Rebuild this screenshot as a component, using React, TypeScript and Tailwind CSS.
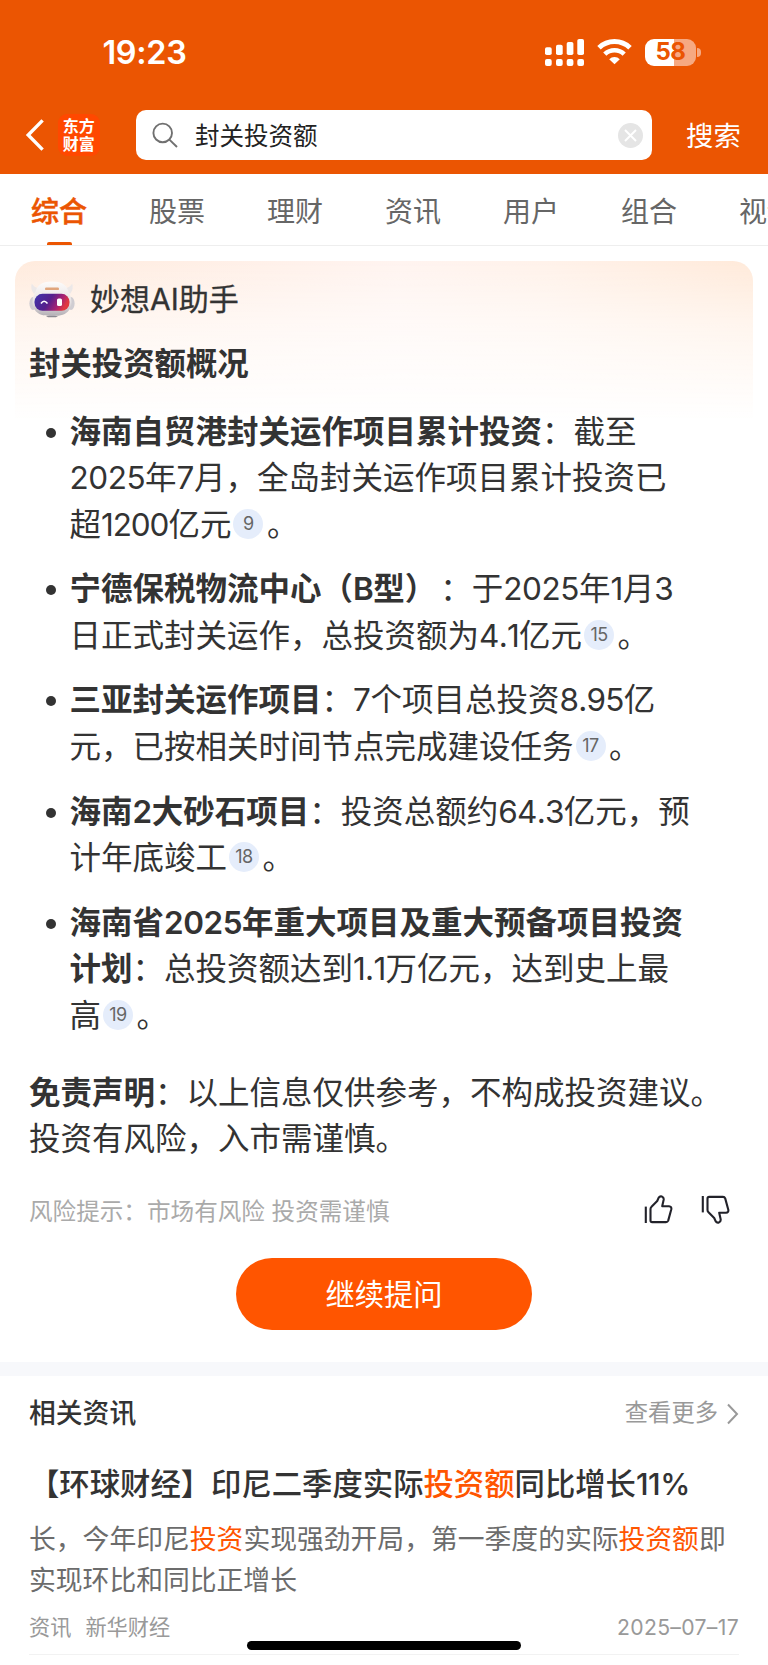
import React from "react";

const TABS = ["综合", "股票", "理财", "资讯", "用户", "组合", "视频"];

/** Sets the tracking of Latin letters and digits inside Chinese text. */
function Mixed({ children }: { children: string }) {
  return (
    <>
      {children.split(/([A-Za-z0-9.%]+)/).map((part, i) => {
        if (i % 2 === 0) return part;
        if (part.includes("."))
          return (
            <span key={i} className="tracking-[-0.023em] [font-kerning:none]">
              {part}
            </span>
          );
        return (
          <span key={i} className={part === "1200" ? "tracking-[-0.035em]" : "tracking-[-0.015em]"}>
            {part}
          </span>
        );
      })}
    </>
  );
}

function Ref({ n }: { n: number }) {
  return (
    <span className="mr-[3.5px] ml-[2px] inline-flex h-[30px] w-[30px] items-center justify-center rounded-full bg-[#e5edfb] align-[6px] text-[18px] leading-none tracking-[-0.03em] text-[#666]">
      {n}
    </span>
  );
}

type Line = { bold?: string; text?: string; note?: number };

const ITEMS: Line[][] = [
  [
    { bold: "海南自贸港封关运作项目累计投资", text: "：截至" },
    { text: "2025年7月，全岛封关运作项目累计投资已" },
    { text: "超1200亿元", note: 9 },
  ],
  [
    { bold: "宁德保税物流中心（B型）", text: "：于2025年1月3" },
    { text: "日正式封关运作，总投资额为4.1亿元", note: 15 },
  ],
  [
    { bold: "三亚封关运作项目", text: "：7个项目总投资8.95亿" },
    { text: "元，已按相关时间节点完成建设任务", note: 17 },
  ],
  [
    { bold: "海南2大砂石项目", text: "：投资总额约64.3亿元，预" },
    { text: "计年底竣工", note: 18 },
  ],
  [
    { bold: "海南省2025年重大项目及重大预备项目投资" },
    { bold: "计划", text: "：总投资额达到1.1万亿元，达到史上最" },
    { text: "高", note: 19 },
  ],
];

function StatusBar() {
  return (
    <div className="flex h-[104px] items-center justify-between pr-[67px] pl-[102.5px]">
      <span className="pt-[2px] text-[32.4px] leading-[40px] font-semibold tracking-[-0.01em]">19:23</span>
      <div className="flex items-center">
        <svg width="39" height="27" viewBox="0 0 39 27" fill="#fff">
          <rect x="0" y="8.3" width="6.7" height="7.7" rx="1.8" />
          <rect x="11" y="5.7" width="6.7" height="10.3" rx="1.8" />
          <rect x="21.7" y="3" width="6.7" height="13" rx="1.8" />
          <rect x="32.3" y="0" width="6.7" height="16" rx="1.8" />
          <rect x="0" y="20" width="6.7" height="7" rx="2" />
          <rect x="11" y="20" width="6.7" height="7" rx="2" />
          <rect x="21.7" y="20" width="6.7" height="7" rx="2" />
          <rect x="32.3" y="20" width="6.7" height="7" rx="2" />
        </svg>
        <svg className="ml-[13px]" width="35" height="26" viewBox="0 0 35 26">
          <path d="M2 8.8 A22.5 22.5 0 0 1 33 8.8" fill="none" stroke="#fff" strokeWidth="5" />
          <path d="M7.8 15.2 A14 14 0 0 1 27.2 15.2" fill="none" stroke="#fff" strokeWidth="4.6" />
          <path d="M17.5 25.3 L12.2 20.2 A7.6 7.6 0 0 1 22.8 20.2 Z" fill="#fff" />
        </svg>
        <div className="ml-[13px] flex h-[27px] w-[51px] items-center justify-center rounded-[9px] bg-linear-to-r from-white from-57% to-[#f6a982] to-57% text-[24px] leading-none font-bold tracking-[-0.02em] text-[#eb5502]">
          58
        </div>
        <div className="ml-[1px] h-[9px] w-[4px] rounded-r-full bg-[#f6a982]" />
      </div>
    </div>
  );
}

function SearchBar() {
  return (
    <div className="flex h-[70px] items-start pt-[6px]">
      <svg className="mt-[9px] ml-[25px]" width="20" height="32" viewBox="0 0 20 32">
        <path d="M17.6 1.4 L3.2 16 L17.6 30.6" fill="none" stroke="#fff" strokeWidth="3.4" />
      </svg>
      <div className="mt-[4px] ml-[12.5px] flex h-[42px] w-[42.5px] flex-col items-center justify-center rounded-[9px] bg-[#ff4800] text-[16px] leading-[18px] font-bold">
        <span>东方</span>
        <span>财富</span>
      </div>
      <div className="ml-[36px] flex h-[50px] w-[516px] items-center rounded-[10px] bg-white">
        <svg className="ml-[16px]" width="26" height="26" viewBox="0 0 26 26" fill="none" stroke="#707070" strokeWidth="1.9">
          <circle cx="10.7" cy="10.9" r="9.3" />
          <path d="M17.4 17.6 L25 25" />
        </svg>
        <span className="ml-[17px] flex-1 pt-[2px] text-[24.5px] leading-[36px] text-[#222]">封关投资额</span>
        <svg className="mr-[9px]" width="25" height="25" viewBox="0 0 25 25">
          <circle cx="12.5" cy="12.5" r="12.5" fill="#e5e5e5" />
          <path d="M7 7 L18 18 M18 7 L7 18" stroke="#fff" strokeWidth="1.9" />
        </svg>
      </div>
      <span className="ml-[34px] pt-px text-[27.4px] leading-[50px]">搜索</span>
    </div>
  );
}

function Tabs() {
  return (
    <nav className="flex h-[72px] gap-[62px] overflow-hidden border-b border-[#eee] pl-[31px] text-[28px] leading-[76px] whitespace-nowrap text-[#666]">
      {TABS.map((t, i) =>
        i === 0 ? (
          <div key={t} className="flex w-[56px] shrink-0 flex-col items-center font-medium text-[#eb5502] [-webkit-text-stroke:0.5px]">
            <span className="h-[68px]">{t}</span>
            <span className="h-[3px] w-[25px] rounded-t-[2px] bg-[#eb5502]" />
          </div>
        ) : (
          <div key={t} className="w-[56px] shrink-0">
            {t}
          </div>
        ),
      )}
    </nav>
  );
}

function Robot() {
  return (
    <svg width="46" height="37" viewBox="0 0 46 37">
      <defs>
        <linearGradient id="shell" x1="0" y1="0" x2="0" y2="1">
          <stop offset="0" stopColor="#fdfbfa" />
          <stop offset="0.6" stopColor="#e6e2e3" />
          <stop offset="1" stopColor="#b3afb5" />
        </linearGradient>
        <linearGradient id="visor" x1="0" y1="0" x2="1" y2="0.3">
          <stop offset="0" stopColor="#3f35ac" />
          <stop offset="0.5" stopColor="#55208c" />
          <stop offset="0.8" stopColor="#a82273" />
          <stop offset="1" stopColor="#e0383f" />
        </linearGradient>
      </defs>
      <path d="M5 13 Q1 8 2.8 2.5 Q5 6.5 10 7.5 Z M41 13 Q45 8 43.2 2.5 Q41 6.5 36 7.5 Z" fill="#ece8e8" />
      <ellipse cx="4" cy="22.5" rx="3.6" ry="6.5" fill="#d0cdd2" />
      <ellipse cx="42" cy="22.5" rx="3.6" ry="6.5" fill="#d0cdd2" />
      <path d="M23 0.5 C34 0.5 38.5 5 39.8 12 C43.5 17 43.5 26 39 30.5 C35 34.5 29 35 23 35 C17 35 11 34.5 7 30.5 C2.5 26 2.5 17 6.2 12 C7.5 5 12 0.5 23 0.5Z" fill="url(#shell)" />
      <path d="M17 35 h12 l-2 1.3 h-8z" fill="#8a8890" />
      <rect x="16" y="6.5" width="14" height="2.6" rx="1.2" fill="#e0a57c" />
      <rect x="5.5" y="12.8" width="35" height="17" rx="8" fill="url(#visor)" />
      <path d="M12 22.5 Q15 18 18.5 22.5" fill="none" stroke="#fff" strokeWidth="1.6" />
      <rect x="28" y="17.5" width="5" height="7.5" rx="1.6" fill="#fff" />
    </svg>
  );
}

function ThumbUp({ className }: { className?: string }) {
  return (
    <svg className={className} width="29" height="29" viewBox="0 0 29 29" fill="none" stroke="#22222a" strokeWidth="2.1" strokeLinejoin="round">
      <path d="M1.8 11.6 V28" />
      <path d="M6.5 14 Q6.5 12.6 7.5 11.7 L13.2 6 L14.7 2.6 Q15.9 0.9 18 1.6 Q20.1 2.5 19.6 5 L18.2 11.2 H25 Q27.8 11.5 27.3 14.2 L24.2 25.6 Q23.6 27.1 22 27.1 H8.2 Q6.5 27.1 6.5 25.4 Z" />
    </svg>
  );
}

function Assistant() {
  return (
    <section className="mx-[15px] mt-[14.5px] h-[1101.5px] rounded-t-[20px] bg-[linear-gradient(180deg,rgba(255,255,255,0)_0px,rgba(255,255,255,0.55)_65px,#fff_160px),linear-gradient(90deg,#ffebdd_0%,#fff0e8_30%,#fff4f0_52%,#fff2ea_72%,#ffeada_100%)] px-[14px] text-[#333]">
      <div className="flex h-[77px] items-center">
        <Robot />
        <span className="ml-[15px] text-[30px] leading-[40px] [-webkit-text-stroke:0.3px]">
          妙想<span>AI</span>助手
        </span>
      </div>
      <h2 className="mt-[3.5px] text-[31.4px] leading-[46.5px] font-semibold">封关投资额概况</h2>
      <ul className="mt-[21px] ml-[40.5px] flex flex-col gap-[18.2px] text-[31.5px] leading-[46.5px] whitespace-nowrap [text-spacing-trim:space-all]">
        {ITEMS.map((lines, i) => (
          <li key={i} className="flex">
            <span className="mt-[19px] mr-[14px] -ml-[24px] h-[10px] w-[10px] rounded-full bg-[#333]" />
            <div>
              {lines.map((l, j) => (
                <div key={j} className="h-[46.5px]">
                  {l.bold && (
                    <b className={l.bold.endsWith("）") ? "mr-[4px] font-semibold" : "font-semibold"}>
                      <Mixed>{l.bold}</Mixed>
                    </b>
                  )}
                  {l.text && <Mixed>{l.text}</Mixed>}
                  {l.note && (
                    <>
                      <Ref n={l.note} />。
                    </>
                  )}
                </div>
              ))}
            </div>
          </li>
        ))}
      </ul>
      <p className="mt-[30.5px] text-[31.5px] leading-[46.5px] whitespace-nowrap">
        <b className="font-semibold">免责声明</b>：以上信息仅供参考，不构成投资建议。
        <br />
        投资有风险，入市需谨慎。
      </p>
      <div className="mt-[27px] flex h-[40px] items-center text-[23.6px] text-[#aaa]">
        <span className="flex-1 pt-[3px]">风险提示：市场有风险 投资需谨慎</span>
        <ThumbUp className="mr-[28px]" />
        <ThumbUp className="mr-[9px] -scale-y-100" />
      </div>
      <div className="mt-[28.5px] flex justify-center">
        <button className="h-[71.5px] w-[296px] rounded-full bg-[#ff5500] pt-px text-[29.3px] text-white">继续提问</button>
      </div>
    </section>
  );
}

function News() {
  return (
    <section className="px-[29px]">
      <div className="flex h-[75px] items-center justify-between">
        <h3 className="text-[26.8px] font-medium text-[#333]">相关资讯</h3>
        <div className="flex items-center text-[23.3px] text-[#999]">
          查看更多
          <svg className="ml-[8px]" width="13" height="22" viewBox="0 0 13 22">
            <path d="M2 1.5 L11 11 L2 20.5" fill="none" stroke="#999" strokeWidth="2" />
          </svg>
        </div>
      </div>
      <h4 className="mt-[10px] text-[30.35px] leading-[46px] font-medium whitespace-nowrap text-[#333]">
        【环球财经】印尼二季度实际<span className="text-[#ff5500]">投资额</span>同比增长<Mixed>11%</Mixed>
      </h4>
      <p className="mt-[12px] text-[26.8px] leading-[41px] whitespace-nowrap text-[#6c6c6c]">
        长，今年印尼<span className="text-[#ff5500]">投资</span>实现强劲开局，第一季度的实际<span className="text-[#ff5500]">投资额</span>即
        <br />
        实现环比和同比正增长
      </p>
      <div className="flex h-[54px] items-center border-b border-[#f2f2f2] text-[21.2px] text-[#999]">
        <span>资讯</span>
        <span className="ml-[14px] flex-1">新华财经</span>
        <span className="tracking-[0.015em]">2025–07–17</span>
      </div>
    </section>
  );
}

export default function App() {
  return (
    <div className="relative h-[1665px] w-[768px] overflow-hidden bg-white font-['Inter','Noto_Sans_CJK_SC',sans-serif]">
      <header className="h-[174px] bg-[#eb5502] text-white">
        <StatusBar />
        <SearchBar />
      </header>
      <Tabs />
      <Assistant />
      <div className="h-[14px] bg-[#f7f8fb]" />
      <News />
      <div className="absolute bottom-[15px] left-[247px] h-[9px] w-[274px] rounded-full bg-black" />
    </div>
  );
}
